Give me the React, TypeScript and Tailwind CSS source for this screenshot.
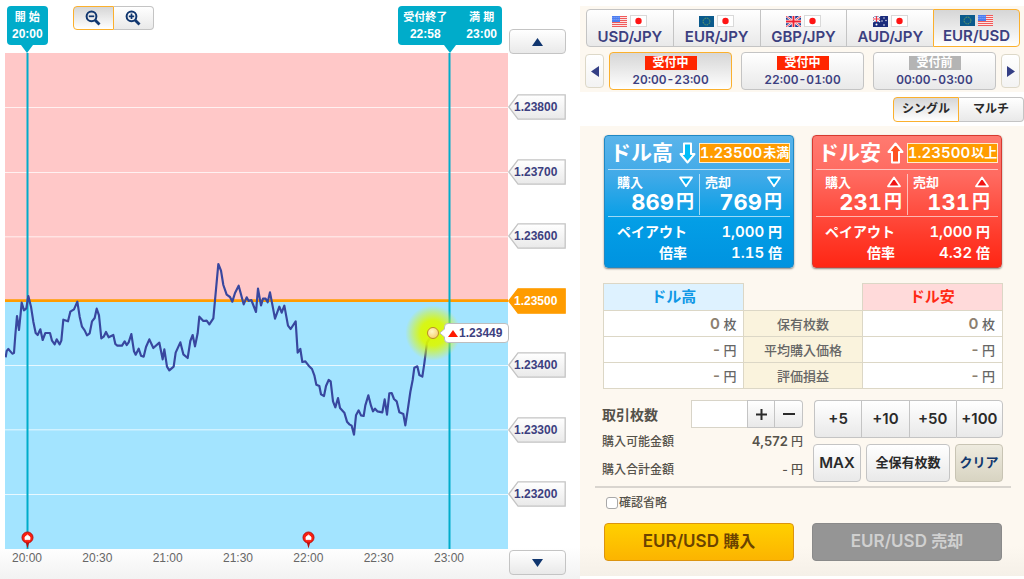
import React, { useState } from "react";

const JP_FONT = 'font-["Inter","Noto_Sans_CJK_JP",sans-serif]';
const CHART_FONT = 'font-["Liberation_Sans","Noto_Sans_CJK_JP",sans-serif]';

const rateLine =
  "17,1072 20,1053 25,1047 31,1054 37,1061 42,1059 46,1005 51,948 57,990 62,940 65,908 72,931 79,925 85,888 93,920 100,965 107,999 113,1005 121,988 128,1020 136,999 150,999 156,1022 164,1033 170,1018 179,1033 184,1022 190,959 204,964 211,935 222,928 232,905 239,950 246,980 254,991 261,1006 269,1000 276,964 284,954 290,926 297,946 304,1015 311,1010 318,996 326,1012 340,1005 346,1032 352,1037 366,1037 374,1024 380,1035 386,1027 394,1002 402,1054 407,1064 416,1046 423,1067 431,1070 438,1041 448,1018 460,1044 478,1028 488,1078 493,1048 501,1100 508,1111 521,1100 527,1058 541,1027 550,1063 563,1074 571,1023 578,1005 585,1039 593,1000 598,950 610,963 620,962 628,973 640,955 655,792 663,812 670,855 680,884 690,891 697,905 705,879 716,857 731,913 740,892 746,903 754,900 768,936 774,866 783,916 789,896 797,896 803,907 810,877 825,956 838,920 845,938 853,917 864,977 872,987 887,964 893,1058 901,1047 907,1086 916,1084 926,1097 936,1107 943,1126 949,1154 958,1158 963,1183 972,1188 978,1158 986,1140 992,1144 999,1204 1006,1222 1014,1194 1020,1224 1033,1238 1041,1265 1048,1273 1055,1277 1062,1304 1068,1246 1076,1231 1083,1246 1091,1248 1096,1216 1105,1186 1113,1217 1119,1234 1125,1226 1132,1234 1147,1237 1154,1198 1161,1244 1168,1180 1175,1179 1182,1197 1190,1204 1198,1237 1210,1242 1216,1276 1223,1231 1231,1176 1238,1140 1243,1103 1252,1099 1258,1125 1267,1130 1273,1090 1281,1028 1298,1000";

const gridLines = [321, 516, 709, 1095, 1288, 1482];
const prices = ["1.23800", "1.23700", "1.23600", "1.23500", "1.23400", "1.23300", "1.23200"];
const times = ["20:00", "20:30", "21:00", "21:30", "22:00", "22:30", "23:00"];

function Flag({ code }: { code: string }) {
  if (code === "jp")
    return (
      <svg width="17" height="12" viewBox="0 0 17 12" aria-hidden="true">
        <rect x=".5" y=".5" width="16" height="11" fill="#fff" stroke="#d9d9d9" />
        <circle cx="8.5" cy="6" r="3.2" fill="#ff1414" />
      </svg>
    );
  if (code === "us")
    return (
      <svg width="15" height="11" viewBox="0 0 15 11" aria-hidden="true">
        <rect width="15" height="11" fill="#fbe3e3" />
        {[0, 2, 4, 6, 8, 10].map((y) => (
          <rect key={y} y={y} width="15" height="1" fill="#f05a5a" />
        ))}
        <rect width="8" height="6" fill="#4c7df0" />
        {[1, 3, 5, 7].map((x) => (
          <path key={x} d={`M${x - 0.5} 1.5h.8M${x - 0.5} 3.5h.8`} stroke="#a9c4ff" strokeWidth=".8" />
        ))}
      </svg>
    );
  if (code === "eu")
    return (
      <svg width="15" height="11" viewBox="0 0 15 11" aria-hidden="true">
        <rect width="15" height="11" fill="#0a5a8c" />
        <circle cx="7.5" cy="5.5" r="3.4" fill="none" stroke="#7fae5a" strokeWidth="1" strokeDasharray="1 .78" />
      </svg>
    );
  if (code === "gb")
    return (
      <svg width="15" height="11" viewBox="0 0 15 11" aria-hidden="true">
        <rect width="15" height="11" fill="#1f3d95" />
        <path d="M0 0L15 11M15 0L0 11" stroke="#fff" strokeWidth="2.2" />
        <path d="M0 0L15 11M15 0L0 11" stroke="#ee3344" strokeWidth=".9" />
        <path d="M7.500 0V11M0 5.500H15" stroke="#fff" strokeWidth="3.400" />
        <path d="M7.500 0V11M0 5.500H15" stroke="#ee2233" strokeWidth="1.900" />
      </svg>
    );
  return (
    <svg width="15" height="11" viewBox="0 0 15 11" aria-hidden="true">
      <rect width="15" height="11" fill="#1b2c7c" />
      <path d="M0 0L7 6M7 0L0 6" stroke="#fff" strokeWidth="1.400" />
      <path d="M3.500 0V6M0 3H7" stroke="#fff" strokeWidth="2" />
      <path d="M3.500 0V6M0 3H7" stroke="#ee3344" strokeWidth="1" />
      <g fill="#fff">
        <circle cx="3.500" cy="8.500" r="1" />
        <circle cx="11" cy="2" r=".7" />
        <circle cx="9" cy="5" r=".7" />
        <circle cx="13" cy="4.500" r=".7" />
        <circle cx="11" cy="9" r=".8" />
      </g>
    </svg>
  );
}

function Triangle({ dir, w, h, color }: { dir: "up" | "down" | "left" | "right"; w: number; h: number; color: string }) {
  const d = {
    up: "M0 10L5 0L10 10Z",
    down: "M0 0H10L5 10Z",
    left: "M10 0V10L0 5Z",
    right: "M0 0L10 5L0 10Z",
  }[dir];
  return (
    <svg width={w} height={h} viewBox="0 0 10 10" preserveAspectRatio="none" aria-hidden="true">
      <path d={d} fill={color} />
    </svg>
  );
}

function Magnifier({ plus }: { plus?: boolean }) {
  return (
    <svg width="16" height="16" viewBox="0 0 16 16" fill="none" stroke="#10366f" aria-hidden="true">
      <circle cx="6.500" cy="6.300" r="4.900" strokeWidth="2" />
      <path d="M10 10L14.500 14.500" strokeWidth="2.800" />
      <path d={plus ? "M3.800 6.300H9.200M6.500 3.600V9" : "M3.800 6.300H9.200"} strokeWidth="1.700" />
    </svg>
  );
}

function Callout({ cols }: { cols: string[][] }) {
  return (
    <div className="flex flex-col items-center">
      <div className="flex h-[39px] items-center gap-[19px] rounded bg-[#00acca] px-[5px] text-xs font-bold text-white">
        {cols.map(([label, time]) => (
          <div key={label} className="text-center">
            <div className="h-[17px] text-[11px] leading-[17px] whitespace-pre">{label}</div>
            <div className="h-[17px] leading-[17px]">{time}</div>
          </div>
        ))}
      </div>
      <Triangle dir="down" w={12} h={8} color="#00acca" />
    </div>
  );
}

function PriceTag({ value }: { value: string }) {
  const strike = value === "1.23500";
  return (
    <div className="relative flex h-[26px] w-[58px] items-center pl-[6px]">
      <svg className="absolute inset-0" width="58" height="26" viewBox="0 0 58 26" aria-hidden="true">
        <defs>
          <linearGradient id="tag" x1="0" y1="0" x2="0" y2="1">
            <stop offset="0" stopColor="#fff" />
            <stop offset="1" stopColor="#e9e9e9" />
          </linearGradient>
        </defs>
        <path
          d="M.8 13L10 .8H57.200V25.200H10Z"
          fill={strike ? "#ff9c00" : "url(#tag)"}
          stroke={strike ? "#ff9c00" : "#c4c4c4"}
          strokeWidth="1.300"
        />
      </svg>
      <span className={`relative text-xs font-bold ${strike ? "text-white" : "text-[#3c4080]"}`}>{value}</span>
    </div>
  );
}

function Pin() {
  return (
    <svg width="13" height="18" viewBox="0 0 13 18" aria-hidden="true">
      <path d="M6.500 17.500L4.800 11.500H8.200Z" fill="#b80d0d" />
      <circle cx="6.500" cy="6.500" r="5.500" fill="#fb1f10" stroke="#b81010" strokeWidth="1" />
      <path d="M6.500 4L9 6V8.600H4V6Z" fill="#fff" stroke="#fff" strokeWidth=".8" strokeLinejoin="round" />
    </svg>
  );
}

const grayButton = "border border-[#c4c4c4] bg-linear-to-b from-white to-[#e9e9e9]";
const activeButton = "border border-[#fbb02d] bg-linear-to-b from-[#d6d6d6] to-white";

function Chart() {
  return (
    <section className={`flex min-w-0 bg-[linear-gradient(to_top,#f2f2f2,#ffffff_32px)] ${CHART_FONT}`}>
      <div className="min-w-0 flex-1 pl-[5px]">
        <div className="flex h-[53px] items-start pt-[6px] pr-[6px] pl-[2px]">
          <Callout cols={[["開 始", "20:00"]]} />
          <div className="ml-[25px] flex">
            <button aria-label="縮小" className={`flex h-6 w-[41px] items-center justify-center rounded-l ${activeButton}`}>
              <Magnifier />
            </button>
            <button aria-label="拡大" className={`flex h-6 w-10 items-center justify-center rounded-r border-l-0 ${grayButton}`}>
              <Magnifier plus />
            </button>
          </div>
          <div className="ml-auto">
            <Callout cols={[["受付終了", "22:58"], ["満 期", "23:00"]]} />
          </div>
        </div>
        <div className="relative h-[496px]">
          <svg className="block h-full w-full" viewBox="15 159 1509 1488" preserveAspectRatio="none" aria-label="EUR/USD">
            <rect x="15" y="159" width="1509" height="744" fill="#ffc8c8" />
            <rect x="15" y="903" width="1509" height="744" fill="#a3e4ff" />
            {gridLines.map((y) => (
              <line key={y} x1="15" x2="1524" y1={y + 1.5} y2={y + 1.5} stroke="#fff" strokeOpacity=".75" strokeWidth="3" />
            ))}
            <line x1="15" x2="1524" y1="902" y2="902" stroke="#ff9c00" strokeWidth="8" />
            <line x1="82.500" x2="82.500" y1="159" y2="1647" stroke="#00acca" strokeWidth="6" />
            <line x1="1348.500" x2="1348.500" y1="159" y2="1647" stroke="#00acca" strokeWidth="6" />
            <polyline points={rateLine} fill="none" stroke="#38479f" strokeWidth="6.500" strokeLinejoin="round" />
          </svg>
          <div className="absolute top-[252px] left-[85.1%] -ml-7 size-14 rounded-full bg-[radial-gradient(circle,#dcf800_0%,#dcf800e6_32%,#dcf80070_52%,#dcf80000_70%)]" />
          <div className="absolute top-[274px] left-[85.1%] -ml-1.5 size-3 rounded-full border border-[#b98a2c] bg-[radial-gradient(circle_at_40%_35%,#fff8c8,#f5c75a)]" />
          <div className="absolute top-[270px] left-[85.1%] ml-1.5 flex items-center">
            <svg className="relative z-10 -mr-px" width="6" height="10" viewBox="0 0 6 10" aria-hidden="true">
              <path d="M6 .5L.8 5L6 9.500" fill="#fff" stroke="#bbb" />
            </svg>
            <div className="flex h-5 w-[65px] items-center gap-px rounded-sm border border-[#bdbdbd] bg-white pl-[3px] text-xs font-bold text-[#3c4080]">
              <Triangle dir="up" w={10} h={7} color="#ff1a00" />
              1.23449
            </div>
          </div>
          <div className="absolute bottom-0 left-[4.5%] -ml-[7px]">
            <Pin />
          </div>
          <div className="absolute bottom-0 left-[60.5%] -ml-[7px]">
            <Pin />
          </div>
        </div>
        <div className="flex justify-between pr-[44px] pl-[7px] text-xs leading-[18px] text-[#666]">
          {times.map((t) => (
            <span key={t}>{t}</span>
          ))}
        </div>
      </div>
      <div className="w-[72px] pt-[29px]">
        <button aria-label="上へ" className={`ml-px flex h-[25px] w-[57px] items-center justify-center rounded-sm ${grayButton}`}>
          <Triangle dir="up" w={11} h={8} color="#10366f" />
        </button>
        <div className="mt-[40px] mb-[43px] flex h-[413px] flex-col justify-between">
          {prices.map((p) => (
            <PriceTag key={p} value={p} />
          ))}
        </div>
        <button aria-label="下へ" className={`ml-px flex h-[25px] w-[57px] items-center justify-center rounded-sm ${grayButton}`}>
          <Triangle dir="down" w={11} h={8} color="#10366f" />
        </button>
      </div>
    </section>
  );
}

const pairs: [string, string, string][] = [
  ["USD/JPY", "us", "jp"],
  ["EUR/JPY", "eu", "jp"],
  ["GBP/JPY", "gb", "jp"],
  ["AUD/JPY", "au", "jp"],
  ["EUR/USD", "eu", "us"],
];

const slots = [
  { status: "受付中", time: "20:00-23:00", open: true },
  { status: "受付中", time: "22:00-01:00", open: true },
  { status: "受付前", time: "00:00-03:00", open: false },
];

function Selector() {
  return (
    <div className="bg-[#fdf8f0] pt-[3px] pr-1 pb-0.5 pl-[5px] text-[#3c4080]">
      <div className="ml-px grid grid-cols-5">
        {pairs.map(([name, a, b], i) => (
          <button
            key={name}
            className={`flex h-[38px] flex-col items-center pt-[5px] ${i === 0 ? "rounded-l" : ""} ${
              i === 4 ? `rounded-r ${activeButton}` : `${grayButton} ${i === 3 ? "border-r-0" : "-mr-px"}`
            }`}
          >
            <span className="flex h-3 items-center gap-[3px]">
              <Flag code={a} />
              <Flag code={b} />
            </span>
            <span className="text-[15px] leading-5 font-semibold">{name}</span>
          </button>
        ))}
      </div>
      <div className="mt-[5px] flex items-center gap-[5px]">
        <button aria-label="前へ" className="flex h-[34px] w-[19px] items-center justify-center rounded-sm border border-[#ddd8c8] bg-linear-to-b from-white to-[#f3f3f3]">
          <Triangle dir="left" w={8} h={11} color="#343f85" />
        </button>
        <div className="grid flex-1 grid-cols-3 gap-[9px]">
          {slots.map((s, i) => (
            <button key={s.time} className={`flex h-[38px] flex-col items-center rounded pt-[3px] ${i === 0 ? activeButton : grayButton}`}>
              <span className={`h-[14px] w-[52px] text-xs leading-[14px] font-bold text-white ${s.open ? "bg-[#ff2600]" : "bg-[#b4b4b4]"}`}>
                {s.status}
              </span>
              <span className="text-xs leading-5 font-semibold tabular-nums">{s.time}</span>
            </button>
          ))}
        </div>
        <button aria-label="次へ" className="flex h-[34px] w-[19px] items-center justify-center rounded-sm border border-[#ddd8c8] bg-linear-to-b from-white to-[#f3f3f3]">
          <Triangle dir="right" w={8} h={11} color="#343f85" />
        </button>
      </div>
    </div>
  );
}

type CardData = { title: string; up: boolean; cond: string; buy: string; sell: string; ratio: string };

function CardTriangle({ up }: { up: boolean }) {
  return (
    <svg width="16" height="12" viewBox="0 0 16 12" aria-hidden="true">
      <path
        d={up ? "M8 1.500L14 10.300H2Z" : "M2 1.500H14L8 10.300Z"}
        fill={up ? "#f01414" : "#00aaf0"}
        stroke="#fff"
        strokeWidth="1.800"
        strokeLinejoin="round"
      />
    </svg>
  );
}

function Card({ title, up, cond, buy, sell, ratio }: CardData) {
  return (
    <button
      className={`flex h-[133px] flex-col rounded border px-[3px] text-left text-white tabular-nums shadow-[0_1px_2px_rgba(0,0,0,0.45)] ${
        up
          ? "border-[#d63a30] bg-[linear-gradient(#ff7a70,#ff6a60_30%,#ff3c2c_75%,#ff2614)]"
          : "border-[#2089c4] bg-[linear-gradient(#5ab4ea,#41aae8_30%,#039ee6_65%,#0093e0)]"
      }`}
    >
      <span className="flex h-[34px] w-full items-center border-b border-white/60 pl-0.5">
        <span className="text-[21px] leading-none font-bold whitespace-nowrap">{title}</span>
        <svg className="ml-1.5 shrink-0" width="17" height="22" viewBox="0 0 17 22" aria-hidden="true">
          <path
            d={up ? "M8.500 1.500L15.500 10H12V20.500H5V10H1.500Z" : "M8.500 20.500L15.500 12H12V1.500H5V12H1.500Z"}
            fill={up ? "#ff5220" : "#00bdf8"}
            stroke="#fff"
            strokeWidth="2"
            strokeLinejoin="round"
          />
        </svg>
        <span className="ml-auto flex h-5 w-[91px] items-center justify-center gap-px border border-white/80 bg-[#ff9c00] whitespace-nowrap">
          <span className="text-[15px] leading-none font-semibold">1.23500</span>
          <span className="text-[13px] leading-none font-bold">{cond}</span>
        </span>
      </span>
      <span className="flex h-[47px] w-full border-b border-white/60 pt-1">
        {[
          ["購入", buy],
          ["売却", sell],
        ].map(([label, value], i) => (
          <span key={label} className={`flex h-[41px] w-1/2 flex-col ${i === 0 ? "pr-[5px] pl-[9px]" : "border-l border-white/60 pr-2 pl-[5px]"}`}>
            <span className="flex h-[16px] items-center justify-between">
              <span className="text-[13px] leading-none font-bold">{label}</span>
              <CardTriangle up={up} />
            </span>
            <span className="flex items-center justify-end gap-0.5 leading-6">
              <span className="text-[22px] font-bold">{value}</span>
              <span className="text-[18px] font-bold">円</span>
            </span>
          </span>
        ))}
      </span>
      <span className="grid w-full grid-cols-[1fr_1fr] pt-1 pr-2 pl-[9px] text-[14px] leading-[21px] font-bold">
        <span className="justify-self-end pr-4 whitespace-nowrap">ペイアウト</span>
        <span className="text-right">
          <span className="text-[15px] font-semibold">1,000</span> 円
        </span>
        <span className="justify-self-end pr-4">倍率</span>
        <span className="text-right">
          <span className="text-[15px] font-semibold">{ratio}</span> 倍
        </span>
      </span>
    </button>
  );
}

function Holdings() {
  const rows = [
    ["0", "保有枚数", "枚"],
    ["-", "平均購入価格", "円"],
    ["-", "評価損益", "円"],
  ];
  const value = "border border-[#dcd7c6] bg-white pr-[7px] text-right";
  return (
    <table className="mt-[15px] -ml-px w-[calc(100%+2px)] table-fixed border-collapse text-[13px] font-medium text-[#666]">
      <thead>
        <tr className="h-[27px] text-[15px]">
          <th className="w-[35.2%] border border-[#dcd7c6] bg-[#def2ff] font-bold text-[#0f98e6]">ドル高</th>
          <td />
          <th className="w-[35.2%] border border-[#dcd7c6] bg-[#ffdada] font-bold text-[#ff2a14]">ドル安</th>
        </tr>
      </thead>
      <tbody>
        {rows.map(([n, label, unit]) => (
          <tr key={label} className="h-[26px] leading-5">
            <td className={value}>
              <span className="text-[15px] font-semibold text-[#8c7f70]">{n}</span> {unit}
            </td>
            <th className="border border-[#dcd7c6] bg-[#faf3dd] font-medium">{label}</th>
            <td className={value}>
              <span className="text-[15px] font-semibold text-[#8c7f70]">{n}</span> {unit}
            </td>
          </tr>
        ))}
      </tbody>
    </table>
  );
}

function Order() {
  const [qty, setQty] = useState("");
  const add = (n: number) => setQty(String(Math.max(0, Number(qty || 0) + n)));
  return (
    <div className="mt-[11px] -mr-px -ml-0.5 flex gap-[10px] text-[#55524a]">
      <div className="min-w-0 flex-1">
        <div className="flex h-7 items-center">
          <label htmlFor="qty" className="flex-1 text-[14px] font-bold">
            取引枚数
          </label>
          <input
            id="qty"
            value={qty}
            onChange={(e) => setQty(e.target.value)}
            className="h-7 w-14 border border-r-0 border-[#d8d4c8] bg-white px-1 text-right text-sm"
          />
          <button aria-label="増やす" onClick={() => add(1)} className={`flex h-7 w-7 items-center justify-center ${grayButton}`}>
            <svg width="11" height="11" viewBox="0 0 11 11" aria-hidden="true">
              <path d="M0 5.500H11M5.500 0V11" stroke="#2a2a2a" strokeWidth="2" />
            </svg>
          </button>
          <button aria-label="減らす" onClick={() => add(-1)} className={`flex h-7 w-7 items-center justify-center rounded-r border-l-0 ${grayButton}`}>
            <svg width="12" height="11" viewBox="0 0 12 11" aria-hidden="true">
              <path d="M0 5H12" stroke="#2a2a2a" strokeWidth="2" />
            </svg>
          </button>
        </div>
        <div className="flex h-7 items-center justify-between text-xs font-medium">
          <span>購入可能金額</span>
          <span>
            <span className="text-[13px] font-semibold">4,572</span> 円
          </span>
        </div>
        <div className="flex h-7 items-center justify-between text-xs font-medium">
          <span>購入合計金額</span>
          <span>- 円</span>
        </div>
      </div>
      <div className="w-[190px] text-[#2a2a2a]">
        <div className="ml-px grid grid-cols-4">
          {[5, 10, 50, 100].map((n, i) => (
            <button
              key={n}
              onClick={() => add(n)}
              className={`h-[38px] text-[15px] font-semibold ${grayButton} ${i === 0 ? "rounded-l" : ""} ${i === 3 ? "rounded-r" : "border-r-0"}`}
            >
              +{n}
            </button>
          ))}
        </div>
        <div className="mt-1.5 flex gap-[5px]">
          <button className={`h-[38px] w-12 rounded text-[15px] font-semibold ${grayButton}`}>MAX</button>
          <button className={`h-[38px] flex-1 rounded text-[13px] font-bold whitespace-nowrap ${grayButton}`}>全保有枚数</button>
          <button
            onClick={() => setQty("")}
            className="h-[38px] w-12 rounded border border-[#c8c4b4] bg-linear-to-b from-[#eeebdf] to-[#d8d4c2] text-[13px] font-bold whitespace-nowrap text-[#12386e]"
          >
            クリア
          </button>
        </div>
      </div>
    </div>
  );
}

export default function App() {
  return (
    <main className={`grid min-h-screen grid-cols-[580fr_444fr] bg-white ${JP_FONT}`}>
      <Chart />
      <section className="flex min-w-0 flex-col pt-[6px] pb-[3px]">
        <Selector />
        <div className="flex h-[34px] items-center justify-end text-[12px] font-bold text-[#2a2a2a]">
          <button className={`h-[25px] w-[66px] rounded-l ${activeButton}`}>シングル</button>
          <button className={`h-[25px] w-[65px] rounded-r border-l-0 ${grayButton}`}>マルチ</button>
        </div>
        <div className="flex-1 bg-[linear-gradient(to_top,#f5f0e8,#fdf8f0_30px)] pt-[9px] pr-[22px] pl-6">
          <div className="grid grid-cols-2 gap-[18px]">
            <Card title="ドル高" up={false} cond="未満" buy="869" sell="769" ratio="1.15" />
            <Card title="ドル安" up cond="以上" buy="231" sell="131" ratio="4.32" />
          </div>
          <Holdings />
          <Order />
          <hr className="mt-0.5 -mr-[9px] -ml-[9px] border-t-2 border-[#d9d5cf]" />
          <label className="mt-[5px] flex h-5 items-center gap-px pl-0.5 text-xs font-medium text-[#55524a]">
            <input type="checkbox" className="size-3 appearance-none rounded-[3px] border border-[#a8a8a8] bg-white checked:bg-[#3c4080]" />
            確認省略
          </label>
          <div className="mt-[10px] grid grid-cols-2 gap-[18px] pb-[15px] text-[17px] font-semibold">
            <button className="h-[38px] rounded-sm border border-[#dc9410] bg-linear-to-b from-[#ffd000] to-[#fcb400] text-[#6b4300]">
              EUR/USD <span className="text-base font-bold">購入</span>
            </button>
            <button className="h-[38px] rounded-sm border border-[#8a8a8a] bg-[#959595] text-[#d0d0d0]">
              EUR/USD <span className="text-base font-bold">売却</span>
            </button>
          </div>
        </div>
      </section>
    </main>
  );
}
